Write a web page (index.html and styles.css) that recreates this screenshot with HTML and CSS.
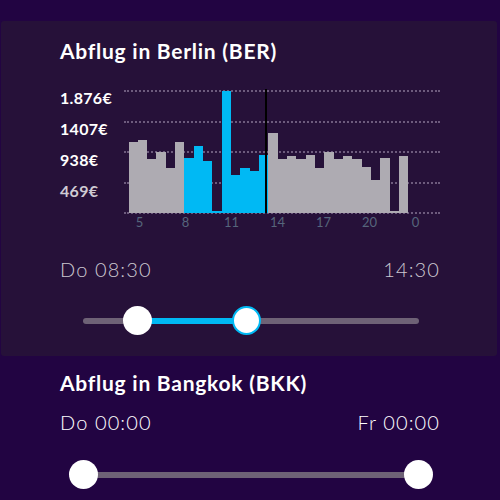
FILE: index.html
```html
<!DOCTYPE html>
<html lang="de">
<head>
<meta charset="utf-8">
<title>Abflugzeiten</title>
<link rel="stylesheet" href="styles.css">
</head>
<body>
  <div class="topbar"></div>

  <section class="card">
    <h2 class="title">Abflug in Berlin (BER)</h2>

    <div class="chart">
      <div class="axis">
        <span class="axis-label">1.876€</span>
        <span class="axis-label">1407€</span>
        <span class="axis-label">938€</span>
        <span class="axis-label dim">469€</span>
      </div>
      <div class="plot-col">
        <div class="plot">
          <div class="grid">
            <i class="gridline"></i><i class="gridline"></i><i class="gridline"></i><i class="gridline"></i><i class="gridline"></i>
          </div>
          <div class="bars">
            <b class="bar" style="height:71px"></b>
            <b class="bar" style="height:73px"></b>
            <b class="bar" style="height:54px"></b>
            <b class="bar" style="height:61px"></b>
            <b class="bar" style="height:45px"></b>
            <b class="bar" style="height:71px"></b>
            <b class="bar sel" style="height:55px"></b>
            <b class="bar sel" style="height:67px"></b>
            <b class="bar sel" style="height:52px"></b>
            <b class="bar sel" style="height:2px"></b>
            <b class="bar sel" style="height:122px"></b>
            <b class="bar sel" style="height:38px"></b>
            <b class="bar sel" style="height:45px"></b>
            <b class="bar sel" style="height:42px"></b>
            <b class="bar sel" style="height:58px"></b>
            <b class="bar" style="height:80px"></b>
            <b class="bar" style="height:54px"></b>
            <b class="bar" style="height:57px"></b>
            <b class="bar" style="height:54px"></b>
            <b class="bar" style="height:58px"></b>
            <b class="bar" style="height:45px"></b>
            <b class="bar" style="height:61px"></b>
            <b class="bar" style="height:54px"></b>
            <b class="bar" style="height:57px"></b>
            <b class="bar" style="height:54px"></b>
            <b class="bar" style="height:46px"></b>
            <b class="bar" style="height:33px"></b>
            <b class="bar" style="height:55px"></b>
            <b class="bar" style="height:2px"></b>
            <b class="bar" style="height:57px"></b>
          </div>
          <div class="now-marker"></div>
        </div>
        <div class="hours">
          <span>5</span><span>8</span><span>11</span><span>14</span><span>17</span><span>20</span><span>0</span>
        </div>
      </div>
    </div>

    <div class="times muted">
      <span>Do 08:30</span>
      <span>14:30</span>
    </div>

    <div class="slider">
      <div class="track"></div>
      <div class="fill" style="left:calc(14px + 16%*337/365); width:calc(32.5%*337/365)"></div>
      <div class="thumb" style="left:calc(16% * 337 / 365)"></div>
      <div class="thumb active" style="left:calc(48.5% * 337 / 365)"></div>
    </div>
  </section>

  <section class="panel">
    <h2 class="title">Abflug in Bangkok (BKK)</h2>
    <div class="times">
      <span>Do 00:00</span>
      <span>Fr 00:00</span>
    </div>
    <div class="slider">
      <div class="track"></div>
      <div class="thumb" style="left:0"></div>
      <div class="thumb" style="left:calc(100% - 29px)"></div>
    </div>
  </section>
</body>
</html>
```

FILE: styles.css
```css
* {
  box-sizing: border-box;
}

html, body {
  margin: 0;
  padding: 0;
}

body {
  width: 500px;
  height: 500px;
  overflow: hidden;
  background: #220442;
  font-family: Lato, "Open Sans", sans-serif;
  color: #ffffff;
}

.topbar {
  height: 21px;
}

.card {
  margin: 0 3px 0 1px;
  padding: 18px 57px 20px 59px;
  background: #261139;
  border-radius: 3px;
}

.panel {
  padding: 15px 60px 0 60px;
}

.title {
  margin: 0;
  font-size: 21px;
  line-height: 24px;
  font-weight: 700;
  letter-spacing: 0.75px;
}

/* price chart */
.chart {
  display: flex;
  margin-top: 19px;
}

.axis {
  width: 64px;
  display: flex;
  flex-direction: column;
}

.axis-label {
  display: block;
  font-size: 16px;
  line-height: 31px;
  font-weight: 700;
  letter-spacing: 0.3px;
  color: #ffffff;
}

.axis-label.dim {
  color: #cfcbd3;
}

.plot-col {
  width: 319px;
  padding-top: 8px;
}

.plot {
  position: relative;
  height: 124px;
}

.grid {
  height: 100%;
  display: flex;
  flex-direction: column;
  justify-content: space-between;
}

.gridline {
  display: block;
  height: 0;
  border-top: 2px dotted #6d5b7d;
}

.bars {
  position: absolute;
  left: 5px;
  bottom: 1px;
  width: 280px;
  height: 124px;
  display: flex;
  align-items: flex-end;
}

.bar {
  flex: 1 1 0;
  background: #aeabb2;
}

.bar.sel {
  background: #00b9f4;
}

.now-marker {
  position: absolute;
  left: 141px;
  top: -1px;
  width: 2px;
  height: 124px;
  background: #000000;
}

.hours {
  display: flex;
  margin-left: -7px;
  font-size: 13px;
  line-height: 16px;
  color: #56667c;
}

.hours span {
  width: 46px;
  text-align: center;
}

/* time range */
.times {
  display: flex;
  justify-content: space-between;
  margin-top: 27px;
  font-size: 20px;
  line-height: 24px;
  font-weight: 300;
  letter-spacing: 1.1px;
  color: #ffffff;
}

.times.muted {
  color: #cdc9d1;
}

.panel .times {
  margin-top: 15px;
}

.slider {
  display: flow-root;
  position: relative;
  height: 30px;
  margin: 25px 7px 0 9px;
}

.panel .slider {
  margin-top: 26px;
}

.track {
  margin: 12px 14px 0;
  height: 6px;
  border-radius: 3px;
  background: #6e6276;
}

.fill {
  position: absolute;
  top: 12px;
  height: 6px;
  background: #00b9f4;
}

.thumb {
  position: absolute;
  top: 0;
  width: 29px;
  height: 29px;
  border-radius: 50%;
  background: #ffffff;
}

.thumb.active {
  border: 2px solid #00b9f4;
}
```
